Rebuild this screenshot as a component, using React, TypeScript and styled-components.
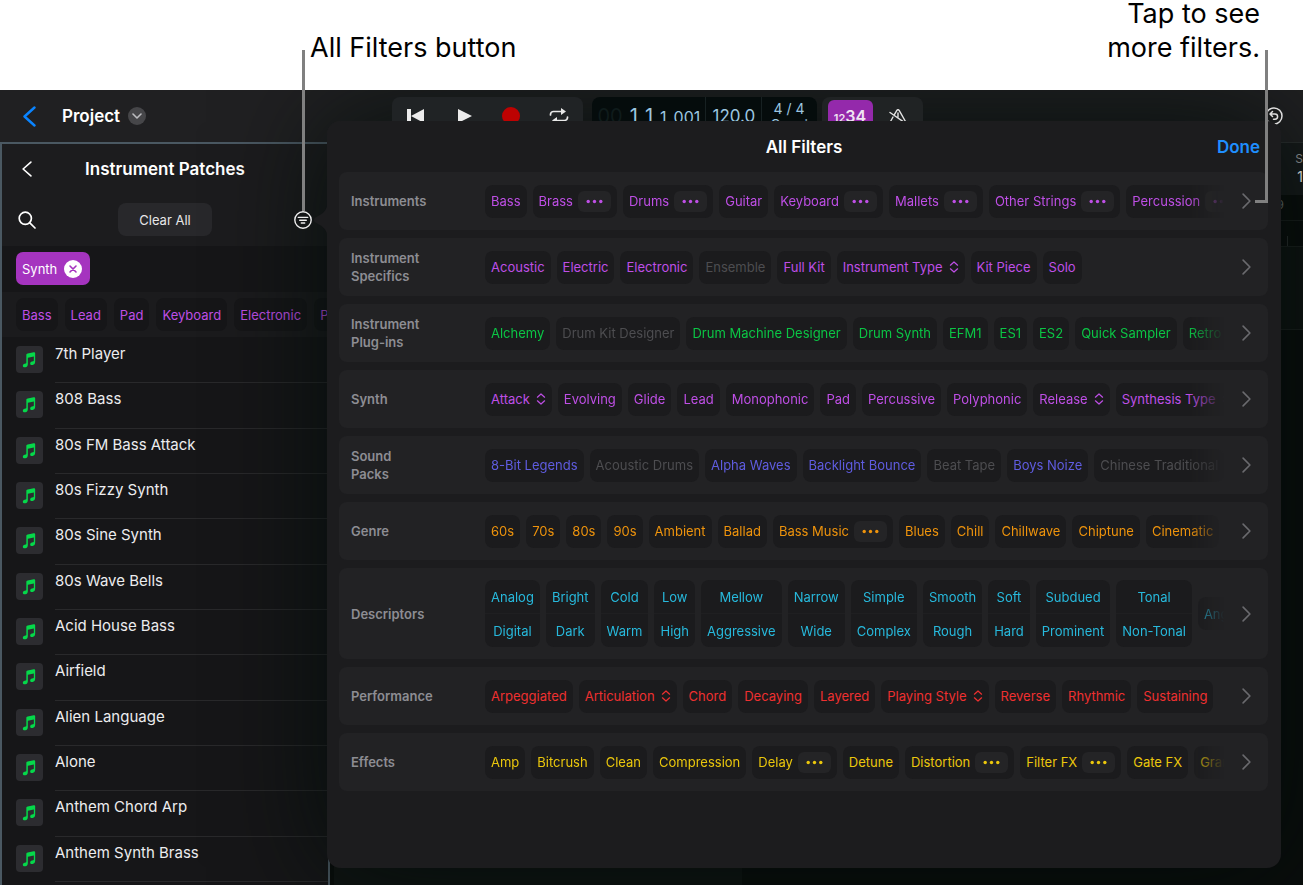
import React from "react";
import styled, { createGlobalStyle, css } from "styled-components";

const GlobalStyle = createGlobalStyle`
  *, *::before, *::after { box-sizing: border-box; }
  body { margin: 0; background: #fff; font-family: Inter, "Liberation Sans", sans-serif; }
  button { font: inherit; color: inherit; background: none; border: 0; padding: 0; margin: 0; cursor: pointer; }
  h1, h2, p, ul { margin: 0; padding: 0; font: inherit; }
  ul { list-style: none; }
`;

const purple = "#bf4fe6";
const green = "#0bc545";
const indigo = "#5f5ce0";
const orange = "#ee930c";
const cyan = "#27b9dc";
const red = "#ee3030";
const yellow = "#ebc70c";

/* ---------- page and callouts ---------- */

const Page = styled.div`
  position: relative;
  display: flex;
  flex-direction: column;
  min-height: 100vh;
  overflow: hidden;
`;

const Callouts = styled.header`
  display: flex;
  justify-content: space-between;
  height: 90px;
  padding: 0 44px 0 310px;
  color: #000;
  font-size: 27px;
  line-height: 34px;
`;

const LeftNote = styled.p`
  padding-top: 31px;
`;

const RightNote = styled.p`
  margin-top: -3px;
  text-align: right;
`;

const LeftLeader = styled.span`
  position: absolute;
  z-index: 3;
  left: 302px;
  top: 50px;
  width: 3px;
  height: 161px;
  background: #808080;
`;

const RightLeader = styled.span`
  position: absolute;
  z-index: 3;
  right: 36px;
  top: 50px;
  width: 13px;
  height: 153px;
  border: solid #808080;
  border-width: 0 3px 3px 0;
`;

/* ---------- app shell ---------- */

const Shell = styled.div`
  position: relative;
  z-index: 0;
  flex: 1;
  display: flex;
  flex-direction: column;
  margin: 0 1px 1px 0;
  overflow: hidden;
  background: #0a0d0c;
  color: #fff;
`;

const TopBar = styled.div`
  display: grid;
  grid-template-columns: 1fr auto 1fr;
  height: 52px;
  padding: 0 20px 0 23px;
  background: #202022;
`;

const TopLeft = styled.div`
  display: flex;
  align-items: center;
  gap: 8px;
  font-size: 17px;
  font-weight: 600;
  svg { display: block; }
`;

const BackButton = styled.button`
  margin-right: 18px;
`;

const DisclosureButton = styled.button`
  display: grid;
  place-items: center;
  width: 18px;
  height: 18px;
  border-radius: 50%;
  background: #464649;
`;

const Transport = styled.div`
  position: relative;
  z-index: 1;
  display: flex;
  gap: 9px;
  margin-left: 8px;
  padding-top: 7px;
`;

const ControlGroup = styled.div`
  display: flex;
  justify-content: space-around;
  width: 191px;
  height: 38px;
  border-radius: 8px;
  background: #202325;
  button { width: 46px; }
  svg { display: block; margin: 0 auto; }
`;

const Lcd = styled.div`
  display: flex;
  width: 225px;
  height: 38px;
  border-radius: 8px;
  background: #050c0c;
  color: #9cc6e0;
  white-space: nowrap;
`;

const Position = styled.div`
  display: flex;
  gap: 7px;
  align-items: baseline;
  width: 114px;
  padding: 6px 0 0 6px;
  font-size: 20px;
  line-height: 26px;
  border-right: 1px solid #172122;
  small { font-size: 16px; }
`;

const Ghost = styled.span`
  color: #0f1b1b;
`;

const Tempo = styled.div`
  width: 56px;
  padding: 6px 0 0 7px;
  font-size: 17px;
  line-height: 26px;
  border-right: 1px solid #172122;
`;

const Signature = styled.div`
  flex: 1;
  padding-top: 4px;
  text-align: center;
  font-size: 14px;
  line-height: 16px;
`;

const ModeGroup = styled.div`
  display: flex;
  width: 101px;
  height: 38px;
  margin-left: -4px;
  padding: 3px 0 0 6px;
  border-radius: 8px;
  background: #202324;
`;

const CountIn = styled.button`
  width: 45px;
  height: 32px;
  border-radius: 6px;
  background: #9429ab;
  color: #f0e4f2;
  font-size: 16px;
  font-weight: 600;
  small { font-size: 11px; }
`;

const MetronomeButton = styled.button`
  flex: 1;
  svg { display: block; margin: 0 auto; }
`;

const TopRight = styled.div`
  position: relative;
  z-index: 1;
  display: flex;
  justify-content: flex-end;
  align-items: center;
  svg { display: block; }
`;

const Body = styled.div`
  flex: 1;
  display: flex;
`;

/* ---------- patch browser ---------- */

const Browser = styled.aside`
  flex: none;
  display: flex;
  flex-direction: column;
  width: 330px;
  border: 2px solid #4a5862;
  border-bottom: 0;
  background: #161618;
`;

const BrowserHeader = styled.div`
  display: grid;
  grid-template-columns: 40px 1fr 40px;
  grid-template-rows: 49px 53px;
  align-items: center;
  justify-items: center;
  padding: 0 5px;
  background: #1c1c1e;
  svg { display: block; }
`;

const BrowserTitle = styled.h1`
  font-size: 17px;
  font-weight: 600;
`;

const HeaderSpacer = styled.span``;

const ClearButton = styled.button`
  width: 94px;
  height: 33px;
  border-radius: 8px;
  background: #28282b;
  color: #e6e6e8;
  font-size: 13px;
`;

const AllFiltersButton = styled.button`
  position: relative;
  z-index: 1;
`;

const ActiveFilters = styled.div`
  height: 46px;
  padding: 6px 14px;
`;

const ActiveChip = styled.button`
  display: flex;
  align-items: center;
  gap: 7px;
  height: 33px;
  padding: 0 8px 0 6px;
  border-radius: 7px;
  background: #a534bf;
  color: #fff;
  font-size: 13px;
  svg { display: block; }
`;

const QuickFilters = styled.div`
  display: flex;
  gap: 7px;
  height: 45px;
  padding: 6px 0 6px 14px;
  overflow: hidden;
  background: #1b1b1d;
`;

const PatchList = styled.ul`
  flex: 1;
  display: grid;
  grid-auto-rows: minmax(45px, 1fr);
  padding: 1px 0 3px 14px;
`;

const PatchRow = styled.li`
  display: flex;
  gap: 12px;
`;

const PatchTile = styled.span`
  flex: none;
  width: 27px;
  height: 27px;
  margin-top: 8px;
  border-radius: 4px;
  background: #2c2c30;
  svg { display: block; }
`;

const PatchName = styled.span`
  flex: 1;
  padding-top: 5px;
  border-bottom: 1px solid #29292b;
  color: #ececee;
  font-size: 15px;
  line-height: 22px;
`;

/* ---------- arrangement behind the popover ---------- */

const Arrange = styled.main`
  flex: 1;
  display: flex;
  flex-direction: column;
  margin-left: 4px;
`;

const Inspector = styled.div`
  height: 53px;
  padding-top: 7px;
  overflow: hidden;
  border-top: 1px solid #2b2e2f;
  background: #171a1b;
  color: #9a9a9e;
  font-size: 12px;
  line-height: 18px;
  text-align: right;
  p + p { color: #fff; font-size: 14px; }
`;

const Ruler = styled.div`
  height: 26px;
  padding-right: 19px;
  border-bottom: 1px solid #1a1e1d;
  color: #6e7271;
  font-size: 12px;
  line-height: 19px;
  text-align: right;
`;

const Ticks = styled.div`
  display: flex;
  justify-content: flex-end;
  align-items: flex-end;
  height: 25px;
  padding-right: 15px;
  &::after { content: ""; width: 1px; height: 10px; background: #2c302f; }
`;

const TrackLane = styled.div`
  height: 84px;
  border: solid #1c201f;
  border-width: 1px 0;
  background: #0f1312;
`;

const LaneFooter = styled.div`
  height: 20px;
  width: 408px;
  margin-top: auto;
  background: #101413;
`;

/* ---------- all filters popover ---------- */

const popoverFrame = css`
  position: absolute;
  left: 327px;
  right: 22px;
  top: 31px;
  bottom: 17px;
  border-radius: 14px;
`;

const Shade = styled.div`
  ${popoverFrame}
  box-shadow: 0 0 110px rgba(2, 12, 8, 0.85);
`;

const Popover = styled.section`
  ${popoverFrame}
  z-index: 2;
  padding: 0 13px 0 12px;
  background: #1c1c1e;
`;

const Pointer = styled.svg`
  position: absolute;
  left: -14px;
  top: 85px;
`;

const PopoverHeader = styled.div`
  display: grid;
  grid-template-columns: 1fr auto 1fr;
  align-items: center;
  height: 51px;
  padding: 0 8px 0 9px;
  font-size: 17px;
  font-weight: 600;
`;

const PopoverTitle = styled.h2`
  grid-column: 2;
`;

const DoneButton = styled.button`
  justify-self: end;
  color: #1f8fff;
`;

const Groups = styled.div`
  display: flex;
  flex-direction: column;
  gap: 8px;
`;

const Group = styled.div`
  display: flex;
  align-items: center;
  min-height: 58px;
  padding: 12px 0 12px 12px;
  border-radius: 8px;
  background: #222224;
`;

const GroupName = styled.div`
  flex: none;
  width: 134px;
  margin: -4px 0;
  color: #8d8d93;
  font-size: 13px;
  font-weight: 600;
  line-height: 18px;
  white-space: pre-line;
`;

const ChipStrip = styled.div<{ $fade: boolean }>`
  flex: 1;
  min-width: 0;
  display: flex;
  align-items: center;
  gap: 6px;
  overflow: hidden;
  ${(p) => p.$fade && css`mask-image: linear-gradient(to right, #000 calc(100% - 36px), transparent);`}
`;

const MoreRowButton = styled.button`
  flex: none;
  width: 44px;
  svg { display: block; margin: 0 auto; }
`;

const chipFace = css`
  flex: none;
  border-radius: 8px;
  background: #1b1b1d;
  font-size: 13px;
  white-space: nowrap;
`;

const Chip = styled.button<{ $color: string }>`
  ${chipFace}
  display: flex;
  align-items: center;
  gap: 6px;
  height: 33px;
  padding: 0 6px;
  color: ${(p) => p.$color};
  &:disabled { color: #4d4d50; cursor: default; }
`;

const QuickChip = styled(Chip)`
  background: #161618;
`;

const SplitChip = styled.div<{ $color: string }>`
  ${chipFace}
  display: flex;
  align-items: center;
  gap: 5px;
  height: 33px;
  padding: 0 6px;
  color: ${(p) => p.$color};
`;

const MorePill = styled.button`
  width: 33px;
  height: 21px;
  border-radius: 6px;
  background: #242426;
  svg { display: block; margin: 0 auto; }
`;

const PairChip = styled.div<{ $color: string }>`
  ${chipFace}
  display: flex;
  flex-direction: column;
  color: ${(p) => p.$color};
  button { height: 33px; padding: 0 6px; }
  button + button { height: 34px; border-top: 1px solid #1f1f21; }
`;

/* ---------- icons ---------- */

const Chevron = ({ dir, w, h, color, stroke }: { dir: "left" | "right"; w: number; h: number; color: string; stroke: number }) => {
  const s = stroke / 2 + 0.3;
  const d = dir === "left" ? `M${w - s} ${s} L${s} ${h / 2} L${w - s} ${h - s}` : `M${s} ${s} L${w - s} ${h / 2} L${s} ${h - s}`;
  return (
    <svg width={w} height={h} viewBox={`0 0 ${w} ${h}`} fill="none" stroke={color} strokeWidth={stroke} strokeLinecap="round" strokeLinejoin="round">
      <path d={d} />
    </svg>
  );
};

const Dots = () => (
  <svg width="17" height="5" viewBox="0 0 17 5" fill="currentColor">
    <circle cx="2.2" cy="2.5" r="1.7" />
    <circle cx="8.5" cy="2.5" r="1.7" />
    <circle cx="14.8" cy="2.5" r="1.7" />
  </svg>
);

const UpDown = () => (
  <svg width="10" height="12" viewBox="0 0 10 12" fill="none" stroke="currentColor" strokeWidth="1.2" strokeLinecap="round" strokeLinejoin="round">
    <path d="M1.4 4.2 5 1l3.6 3.2M1.4 7.8 5 11l3.6-3.2" />
  </svg>
);

const NoteIcon = () => (
  <svg width="27" height="27" viewBox="0 0 81 81" fill="#05d84a">
    <path d="M31 27c0-3 1-4 4-4.600l18-3.800c3-.6 4.500.4 4.500 3v26c0 6-3 8.500-7.500 9.500-4.500.9-7.500-1-7.500-4.500 0-3 2-5 5.500-5.800l3.500-.8c1.500-.3 2-1 2-2.500V31.500L35.500 35v19c0 6-2.500 8.800-7.500 9.700-4.500.8-7.500-1-7.500-4.500 0-3 2-5 5.500-5.800l3-.7c1.500-.3 2-1 2-2.500z" />
  </svg>
);

const SearchIcon = () => (
  <svg width="18" height="18" viewBox="0 0 18 18" fill="none" stroke="#fff" strokeWidth="1.7" strokeLinecap="round">
    <circle cx="7.300" cy="7.300" r="6.100" />
    <path d="M11.800 11.800 17 17" />
  </svg>
);

const FilterIcon = () => (
  <svg width="18" height="18" viewBox="0 0 18 18" fill="none" stroke="#eee" strokeWidth="1.400" strokeLinecap="round">
    <circle cx="9" cy="9" r="8.200" />
    <path d="M4.300 6.400h9.400M5.700 9.200h6.600M7.300 12h3.400" />
  </svg>
);

const RemoveIcon = () => (
  <svg width="18" height="18" viewBox="0 0 18 18">
    <circle cx="9" cy="9" r="9" fill="#fff" />
    <path d="M6 6l6 6M12 6l-6 6" stroke="#a534bf" strokeWidth="1.600" strokeLinecap="round" />
  </svg>
);

/* ---------- data ---------- */

type Item = { label: string; kind?: "more" | "menu" | "off"; second?: string };

const parse = (text: string): Item[] =>
  text.split(",").map((raw) => {
    const mark = raw[0];
    if (mark === "+") return { label: raw.slice(1), kind: "more" };
    if (mark === "^") return { label: raw.slice(1), kind: "menu" };
    if (mark === "-") return { label: raw.slice(1), kind: "off" };
    const [label, second] = raw.split("/");
    return { label, second };
  });

/* "+" has a submenu, "^" opens a value menu, "-" is unavailable, "a/b" is an opposite pair */
const groups = [
  { name: "Instruments", color: purple, fade: true, items: parse("Bass,+Brass,+Drums,Guitar,+Keyboard,+Mallets,+Other Strings,+Percussion") },
  { name: "Instrument\nSpecifics", color: purple, fade: false, items: parse("Acoustic,Electric,Electronic,-Ensemble,Full Kit,^Instrument Type,Kit Piece,Solo") },
  { name: "Instrument\nPlug-ins", color: green, fade: true, items: parse("Alchemy,-Drum Kit Designer,Drum Machine Designer,Drum Synth,EFM1,ES1,ES2,Quick Sampler,Retro Synth") },
  { name: "Synth", color: purple, fade: true, items: parse("^Attack,Evolving,Glide,Lead,Monophonic,Pad,Percussive,Polyphonic,^Release,^Synthesis Type") },
  { name: "Sound\nPacks", color: indigo, fade: true, items: parse("8-Bit Legends,-Acoustic Drums,Alpha Waves,Backlight Bounce,-Beat Tape,Boys Noize,-Chinese Traditional") },
  { name: "Genre", color: orange, fade: true, items: parse("60s,70s,80s,90s,Ambient,Ballad,+Bass Music,Blues,Chill,Chillwave,Chiptune,Cinematic") },
  { name: "Descriptors", color: cyan, fade: true, items: parse("Analog/Digital,Bright/Dark,Cold/Warm,Low/High,Mellow/Aggressive,Narrow/Wide,Simple/Complex,Smooth/Rough,Soft/Hard,Subdued/Prominent,Tonal/Non-Tonal,Angry") },
  { name: "Performance", color: red, fade: false, items: parse("Arpeggiated,^Articulation,Chord,Decaying,Layered,^Playing Style,Reverse,Rhythmic,Sustaining") },
  { name: "Effects", color: yellow, fade: true, items: parse("Amp,Bitcrush,Clean,Compression,+Delay,Detune,+Distortion,+Filter FX,Gate FX,Granular") },
];

const patches = [
  "7th Player", "808 Bass", "80s FM Bass Attack", "80s Fizzy Synth", "80s Sine Synth", "80s Wave Bells",
  "Acid House Bass", "Airfield", "Alien Language", "Alone", "Anthem Chord Arp", "Anthem Synth Brass",
];

const FilterChip = ({ item, color }: { item: Item; color: string }) => {
  if (item.second)
    return (
      <PairChip $color={color}>
        <button type="button">{item.label}</button>
        <button type="button">{item.second}</button>
      </PairChip>
    );
  if (item.kind === "more")
    return (
      <SplitChip $color={color}>
        <button type="button">{item.label}</button>
        <MorePill type="button" aria-label={`More ${item.label}`}><Dots /></MorePill>
      </SplitChip>
    );
  return (
    <Chip type="button" $color={color} disabled={item.kind === "off"} aria-haspopup={item.kind === "menu" ? "menu" : undefined}>
      {item.label}
      {item.kind === "menu" && <UpDown />}
    </Chip>
  );
};

export default function App() {
  return (
    <Page>
      <GlobalStyle />
      <Callouts>
        <LeftNote>All Filters button</LeftNote>
        <RightNote>Tap to see<br />more filters.</RightNote>
      </Callouts>
      <LeftLeader />
      <RightLeader />
      <Shell>
        <TopBar>
          <TopLeft>
            <BackButton type="button" aria-label="Back"><Chevron dir="left" w={13} h={21} color="#0a84ff" stroke={2.4} /></BackButton>
            Project
            <DisclosureButton type="button" aria-label="Project menu">
              <svg width="10" height="6" viewBox="0 0 10 6" fill="none" stroke="#bdbdc0" strokeWidth="1.600" strokeLinecap="round" strokeLinejoin="round"><path d="M1 1l4 4 4-4" /></svg>
            </DisclosureButton>
          </TopLeft>
          <Transport>
            <ControlGroup>
              <button type="button" aria-label="Go to beginning">
                <svg width="17" height="14" viewBox="0 0 17 14" fill="#ececec"><path d="M0 0h4v14H0zM17 0v14L4 7z" /></svg>
              </button>
              <button type="button" aria-label="Play">
                <svg width="17" height="14" viewBox="0 0 17 14" fill="#ececec"><path d="M3 0l14 7-14 7z" /></svg>
              </button>
              <button type="button" aria-label="Record">
                <svg width="18" height="18" viewBox="0 0 18 18"><circle cx="9" cy="9" r="9" fill="#bd0202" /></svg>
              </button>
              <button type="button" aria-label="Cycle">
                <svg width="20" height="16" viewBox="0 0 20 16" fill="none" stroke="#e8e8e8" strokeWidth="1.700" strokeLinecap="round">
                  <path d="M1.500 7V6.500a3 3 0 0 1 3-3H14M18.500 9v.5a3 3 0 0 1-3 3H6" />
                  <path d="M12 0 17 3.500 12 7zM8 9 3 12.500 8 16z" fill="#e8e8e8" stroke="none" />
                </svg>
              </button>
            </ControlGroup>
            <Lcd>
              <Position><Ghost>00</Ghost><span>1</span><span>1</span><small>1</small><small>001</small></Position>
              <Tempo>120.0</Tempo>
              <Signature>4 / 4<br />C maj</Signature>
            </Lcd>
            <ModeGroup>
              <CountIn type="button"><small>12</small>34</CountIn>
              <MetronomeButton type="button" aria-label="Metronome">
                <svg width="20" height="18" viewBox="0 0 20 18" fill="none" stroke="#e4e4e4" strokeWidth="1.400" strokeLinecap="round" strokeLinejoin="round">
                  <path d="M6.500 5.300 9 1.200Q10 .2 11 1.200L17.500 12.500Q18 14 16.500 14H3.500Q2 14 2.500 12.500L5 8M2 3.500l15 10.300M10 4v5" />
                </svg>
              </MetronomeButton>
            </ModeGroup>
          </Transport>
          <TopRight>
            <button type="button" aria-label="Undo">
              <svg width="18" height="18" viewBox="0 0 18 18" fill="none" stroke="#dedede" strokeWidth="1.500" strokeLinecap="round" strokeLinejoin="round">
                <circle cx="9" cy="9" r="8" />
                <path d="M7.500 4.500 5 7l2.500 2.500M5.200 7h4.800a2.600 2.600 0 0 1 0 5.200H8.500" />
              </svg>
            </button>
          </TopRight>
        </TopBar>
        <Body>
          <Browser>
            <BrowserHeader>
              <button type="button" aria-label="Back to library"><Chevron dir="left" w={10} h={16} color="#fff" stroke={1.6} /></button>
              <BrowserTitle>Instrument Patches</BrowserTitle>
              <HeaderSpacer />
              <button type="button" aria-label="Search"><SearchIcon /></button>
              <ClearButton type="button">Clear All</ClearButton>
              <AllFiltersButton type="button" aria-label="All filters"><FilterIcon /></AllFiltersButton>
            </BrowserHeader>
            <ActiveFilters>
              <ActiveChip type="button">Synth<RemoveIcon /></ActiveChip>
            </ActiveFilters>
            <QuickFilters>
              {["Bass", "Lead", "Pad", "Keyboard", "Electronic", "Percussive"].map((t) => (
                <QuickChip type="button" key={t} $color={purple}>{t}</QuickChip>
              ))}
            </QuickFilters>
            <PatchList>
              {patches.map((p) => (
                <PatchRow key={p}>
                  <PatchTile><NoteIcon /></PatchTile>
                  <PatchName>{p}</PatchName>
                </PatchRow>
              ))}
            </PatchList>
          </Browser>
          <Arrange>
            <Inspector><p>S</p><p>1</p></Inspector>
            <Ruler>9</Ruler>
            <Ticks />
            <TrackLane />
            <LaneFooter />
          </Arrange>
        </Body>
        <Shade />
        <Popover aria-label="All Filters">
          <Pointer width="14" height="28" viewBox="0 0 14 28" fill="#1c1c1e"><path d="M14 0v28C13 23 10 20.500 2.500 16.500Q-1 14 2.500 11.500C10 7.500 13 5 14 0z" /></Pointer>
          <PopoverHeader>
            <PopoverTitle>All Filters</PopoverTitle>
            <DoneButton type="button">Done</DoneButton>
          </PopoverHeader>
          <Groups>
            {groups.map((g) => (
              <Group key={g.name}>
                <GroupName>{g.name}</GroupName>
                <ChipStrip $fade={g.fade}>
                  {g.items.map((i) => <FilterChip key={i.label} item={i} color={g.color} />)}
                </ChipStrip>
                <MoreRowButton type="button" aria-label={`All ${g.name}`}><Chevron dir="right" w={9} h={16} color="#6a6a6e" stroke={1.6} /></MoreRowButton>
              </Group>
            ))}
          </Groups>
        </Popover>
      </Shell>
    </Page>
  );
}
